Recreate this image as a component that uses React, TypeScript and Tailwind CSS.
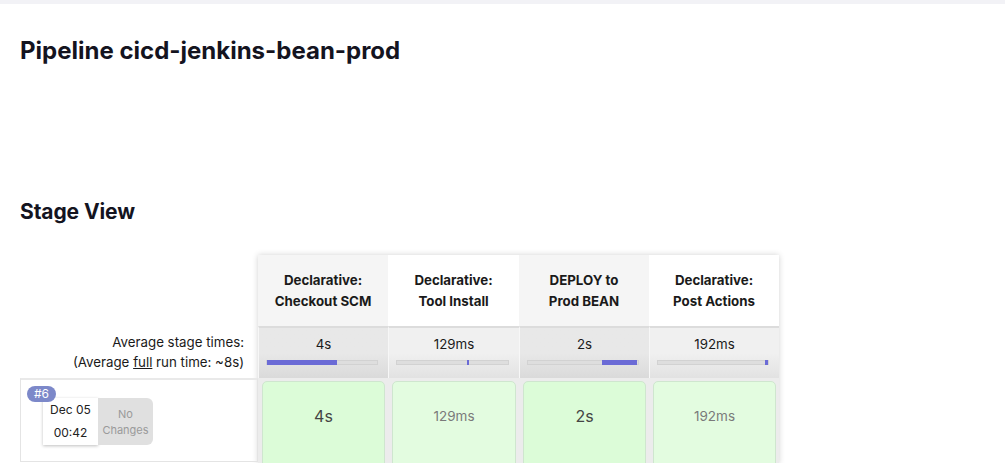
import React from 'react';

type Stage = {
  title: [string, string];
  avg: string;
  bar: { left: number; width: number };
  run: string;
  faded: boolean;
};

const stages: Stage[] = [
  { title: ['Declarative:', 'Checkout SCM'], avg: '4s', bar: { left: 0, width: 64 }, run: '4s', faded: false },
  { title: ['Declarative:', 'Tool Install'], avg: '129ms', bar: { left: 63, width: 2 }, run: '129ms', faded: true },
  { title: ['DEPLOY to', 'Prod BEAN'], avg: '2s', bar: { left: 67, width: 32 }, run: '2s', faded: false },
  { title: ['Declarative:', 'Post Actions'], avg: '192ms', bar: { left: 97, width: 3 }, run: '192ms', faded: true },
];

export default function App() {
  return (
    <div className="min-h-screen bg-white font-['Inter',sans-serif] text-[#14141f]">
      {/* 上部のバー */}
      <div className="h-[4px] bg-[#f2f2f6]" />

      <div className="px-5">
        <h1 className="mt-[31px] text-[24px] font-bold leading-[32px]">Pipeline cicd-jenkins-bean-prod</h1>

        <h2 className="mt-[131px] text-[21px] font-bold leading-[28px] tracking-[-0.1px]">Stage View</h2>

        <div className="mt-[29px] flex">
          {/* 左側: ラベルとビルド */}
          <div className="w-[238px] shrink-0">
            <div className="h-[71px]" />
            <div className="flex h-[52px] flex-col items-end justify-center pr-[14px] text-[13.3px] leading-[20px] text-[#1a1a1a]">
              <span>Average stage times:</span>
              <span>
                (Average <span className="underline">full</span> run time: ~8s)
              </span>
            </div>
            <div className="relative h-[84px] border border-t-2 border-[#e4e4e4] border-t-[#e9e9e9]">
              <span className="absolute left-[6px] top-[6px] z-10 rounded-full bg-[#7c88c9] px-[7px] text-[12px] leading-[16px] text-white">
                #6
              </span>
              <div className="absolute left-[22px] top-[18px] flex h-[47px]">
                <div className="flex w-[55px] flex-col items-center justify-center gap-[7px] bg-white text-[12px] leading-[16px] text-[#222] shadow-[0_1px_3px_rgba(0,0,0,0.25)]">
                  <span>Dec 05</span>
                  <span>00:42</span>
                </div>
                <div className="flex w-[55px] flex-col items-center justify-center rounded-r-[6px] bg-[#e0e0e0] text-[11px] leading-[16px] text-[#9a9a9a]">
                  <span>No</span>
                  <span>Changes</span>
                </div>
              </div>
            </div>
          </div>

          {/* 右側: ステージ表 */}
          <div className="grid grid-cols-[130px_131px_130px_130px] shadow-[0_0_6px_rgba(0,0,0,0.18)]">
            {stages.map((s, i) => (
              <div
                key={'h' + i}
                className={`flex h-[71px] flex-col items-center justify-center text-[13.3px] font-bold leading-[21px] text-[#1a1a1a] ${
                  i % 2 === 0 ? 'bg-[#f5f5f5]' : 'bg-white'
                }`}
              >
                <span>{s.title[0]}</span>
                <span>{s.title[1]}</span>
              </div>
            ))}

            {stages.map((s, i) => (
              <div
                key={'a' + i}
                className={`flex h-[52px] flex-col border-t-2 border-l border-t-[#dcdcdc] border-l-[#f7f7f7] px-[7px] pt-[7px] ${
                  i % 2 === 0
                    ? 'bg-gradient-to-b from-[#e8e8e8] via-[#e8e8e8] to-[#dadada]'
                    : 'bg-gradient-to-b from-[#f0f0f0] via-[#f0f0f0] to-[#e2e2e2]'
                }`}
              >
                <span className="text-center text-[13.3px] leading-[18px] text-[#1a1a1a]">{s.avg}</span>
                <div className="relative mt-[7px] mr-[3px] h-[5px] border border-[#d2d2d2] bg-[#dedede]">
                  <div
                    className="absolute -top-px h-[5px] bg-[#6b6bd6]"
                    style={{ left: `${s.bar.left}%`, width: `${s.bar.width}%` }}
                  />
                </div>
              </div>
            ))}

            {stages.map((s, i) => (
              <div key={'r' + i} className="h-[86px] border-l border-[#ececec] bg-[#ececec] px-[3px] pt-[3px]">
                <div
                  className={`flex h-[100px] justify-center rounded-[5px] border border-[#cfe6cf] pt-[22px] leading-[24px] ${
                    i % 2 === 0 ? 'bg-[#dcfcd8]' : 'bg-[#e3fce0]'
                  } ${s.faded ? 'text-[13.5px] text-[#7a7a7a]' : 'text-[16px] text-[#444]'}`}
                >
                  {s.run}
                </div>
              </div>
            ))}
          </div>
        </div>
      </div>
    </div>
  );
}
